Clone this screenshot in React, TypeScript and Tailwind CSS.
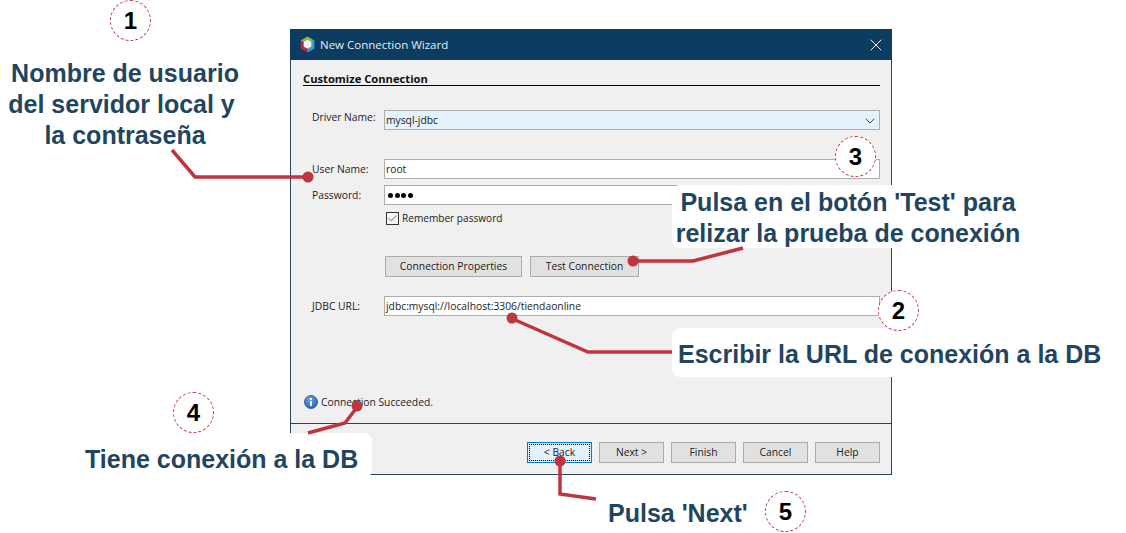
import { Check, ChevronDown, X } from 'lucide-react';

const ui = "font-['Open_Sans','Noto_Sans',sans-serif]";

function WizardButton({ label, width, focused }: { label: string; width: string; focused?: boolean }) {
  if (focused) {
    return (
      <div className={`${width} h-[21px] border border-[#0078d7] bg-[#e5f1fb] p-px`}>
        <div className="h-full flex items-center justify-center border border-dotted border-black text-[10.3px] text-[#222]">
          {label}
        </div>
      </div>
    );
  }
  return (
    <div className={`${width} h-[21px] flex items-center justify-center border border-[#adadad] bg-[#e1e1e1] text-[10.3px] text-[#222]`}>
      {label}
    </div>
  );
}

function Field({ value, tint, children }: { value?: string; tint?: boolean; children?: React.ReactNode }) {
  return (
    <div className={`flex-1 h-5 flex items-center justify-between pl-[1px] pr-px border border-[#adadad] text-[10.3px] text-[#222] ${tint ? 'bg-[#e5f1fb]' : 'bg-white'}`}>
      {value && <span className="pt-[2px]">{value}</span>}
      {children}
    </div>
  );
}

function Row({ label, className, labelClass, children }: { label: string; className?: string; labelClass?: string; children: React.ReactNode }) {
  return (
    <div className={`flex items-center ${className ?? ''}`}>
      <span className={`w-[81px] shrink-0 pl-[9px] whitespace-nowrap text-[10.3px] leading-[14px] text-[#222] ${labelClass ?? ''}`}>{label}</span>
      {children}
    </div>
  );
}

function Dialog() {
  return (
    <div className={`w-[602px] h-[446px] flex flex-col border border-t-0 border-[#27465c] bg-[#f0f0f0] ${ui}`}>
      <div className="h-[31px] -mx-px flex items-center bg-[#0c3d60] pl-[10px] pr-[6px]">
        <svg viewBox="1 0 14 16" className="w-[15px] h-[17px]">
          <path d="M8 0.5 14.5 4.2 8 8 1.5 4.2Z" fill="#7cc142" />
          <path d="M1.5 4.2 8 8V15.5L1.5 11.8Z" fill="#b8264f" />
          <path d="M14.5 4.2 8 8V15.5L14.5 11.8Z" fill="#3d9ad6" />
          <path d="M8 3.6 11.6 5.7V9.9L8 12 4.4 9.9V5.7Z" fill="#f4f4f4" />
        </svg>
        <span className="ml-[5px] text-[11.5px] text-[#e4ebf0]">New Connection Wizard</span>
        <X className="ml-auto w-5 h-5 text-[#f2f5f7]" strokeWidth={1.2} />
      </div>

      <div className="flex-1 flex flex-col pl-3 pr-[11px]">
        <div className="mt-[12px] h-[14px] border-b border-black text-[11.2px] font-bold leading-[13px] text-[#111]">
          Customize Connection
        </div>

        <Row label="Driver Name:" labelClass="-mt-[6px]" className="mt-[24px]">
          <Field value="mysql-jdbc" tint>
            <ChevronDown className="w-4 h-4 mt-[2px] text-[#444]" strokeWidth={1.5} />
          </Field>
        </Row>
        <Row label="User Name:" className="mt-[29px]">
          <Field value="root" />
        </Row>
        <Row label="Password:" className="mt-[6px]">
          <Field>
            <div className="flex gap-[1.5px] pl-[2px]">
              {[0, 1, 2, 3].map((i) => (
                <span key={i} className="w-[5px] h-[5px] rounded-full bg-black" />
              ))}
            </div>
          </Field>
        </Row>

        <div className="mt-[7px] ml-[83px] flex items-center h-[13px] text-[10.1px] text-[#222]">
          <span className="w-[13px] h-[13px] flex items-center justify-center border border-[#333] bg-[#f4f4f4]">
            <Check className="w-[11px] h-[11px] text-[#333]" strokeWidth={1.5} />
          </span>
          <span className="ml-[3px]">Remember password</span>
        </div>

        <div className="mt-[31px] ml-[82px] flex gap-2">
          <WizardButton label="Connection Properties" width="w-[137px]" />
          <WizardButton label="Test Connection" width="w-[109px]" />
        </div>

        <Row label="JDBC URL:" className="mt-[19px]">
          <Field value="jdbc:mysql://localhost:3306/tiendaonline" />
        </Row>

        <div className="mt-[77px] flex items-center text-[10.3px] text-[#222]">
          <svg viewBox="0 0 14 14" className="w-[14px] h-[14px] mr-[3px] ml-px">
            <defs>
              <radialGradient id="info" cx="0.4" cy="0.3" r="0.8">
                <stop offset="0" stopColor="#6fa6e6" />
                <stop offset="1" stopColor="#1f5bb0" />
              </radialGradient>
            </defs>
            <circle cx="7" cy="7" r="6.5" fill="url(#info)" stroke="#1d4f94" strokeWidth="0.8" />
            <rect x="6" y="6" width="2" height="5" fill="#fff" />
            <rect x="6" y="3" width="2" height="2" fill="#fff" />
          </svg>
          <span className="pt-[2px]">Connection Succeeded.</span>
        </div>
      </div>

      <div className="h-[51px] border-t border-[#27465c] flex justify-end gap-[7px] pt-[18px] pr-[11px]">
        <WizardButton label="< Back" width="w-[65px]" focused />
        <WizardButton label="Next >" width="w-[65px]" />
        <WizardButton label="Finish" width="w-[65px]" />
        <WizardButton label="Cancel" width="w-[65px]" />
        <WizardButton label="Help" width="w-[65px]" />
      </div>
    </div>
  );
}

function Badge({ n, className }: { n: number; className: string }) {
  return (
    <div className={`absolute w-[41px] h-[41px] flex items-center justify-center rounded-full border border-dashed border-[#c0394b] bg-white text-[24px] font-bold text-black font-['Liberation_Sans',sans-serif] ${className}`}>
      {n}
    </div>
  );
}

const callout = "absolute bg-white rounded-[8px] text-[#1f4560] font-bold text-[25px] leading-[31px] font-['Liberation_Sans',sans-serif] whitespace-nowrap";

export default function App() {
  return (
    <div className="relative w-[1126px] h-[533px] bg-white overflow-hidden pl-[290px] pt-[29px]">
      <Dialog />

      {/* labels */}
      <div className={`${callout} left-[672px] top-[185px] w-[352px] h-[63px] pt-[2px] text-center`}>
        Pulsa en el botón 'Test' para<br />relizar la prueba de conexión
      </div>
      <div className={`${callout} left-[672px] top-[328px] h-[49px] pl-[6px] pr-[9px] pt-[11px]`}>
        Escribir la URL de conexión a la DB
      </div>
      <div className={`${callout} left-[60px] top-[433px] w-[312px] h-[45px] pl-[25px] pt-[11px]`}>
        Tiene conexión a la DB
      </div>
      <div className={`${callout} left-[0px] top-[58px] w-[250px] text-center`}>
        Nombre de usuario<br />del servidor local y&nbsp;<br />la contraseña
      </div>
      <div className={`${callout} left-[608px] top-[498px]`}>Pulsa 'Next'</div>

      {/* leader lines */}
      <svg className="absolute inset-0 pointer-events-none" width="1126" height="533" viewBox="0 0 1126 533" fill="none">
        <g stroke="#c0343f" strokeWidth="3.5">
          <polyline points="172,150 195,177 308,177" />
          <polyline points="632,261 693,261 743,248" />
          <polyline points="513,319 588,352 672,352" />
          <polyline points="358,406 345,423 308,433" />
          <polyline points="560,461 560,494 596,499" />
        </g>
        <g fill="#c0343f">
          <circle cx="308" cy="177" r="5.5" />
          <circle cx="633" cy="261" r="5.5" />
          <circle cx="512" cy="318" r="5.5" />
          <circle cx="357" cy="406" r="5.5" />
          <circle cx="560" cy="461" r="5.5" />
        </g>
      </svg>

      <Badge n={1} className="left-[110px] top-0" />
      <Badge n={2} className="left-[878px] top-[290px]" />
      <Badge n={3} className="left-[835px] top-[136px]" />
      <Badge n={4} className="left-[173px] top-[392px]" />
      <Badge n={5} className="left-[765px] top-[491px]" />
    </div>
  );
}
